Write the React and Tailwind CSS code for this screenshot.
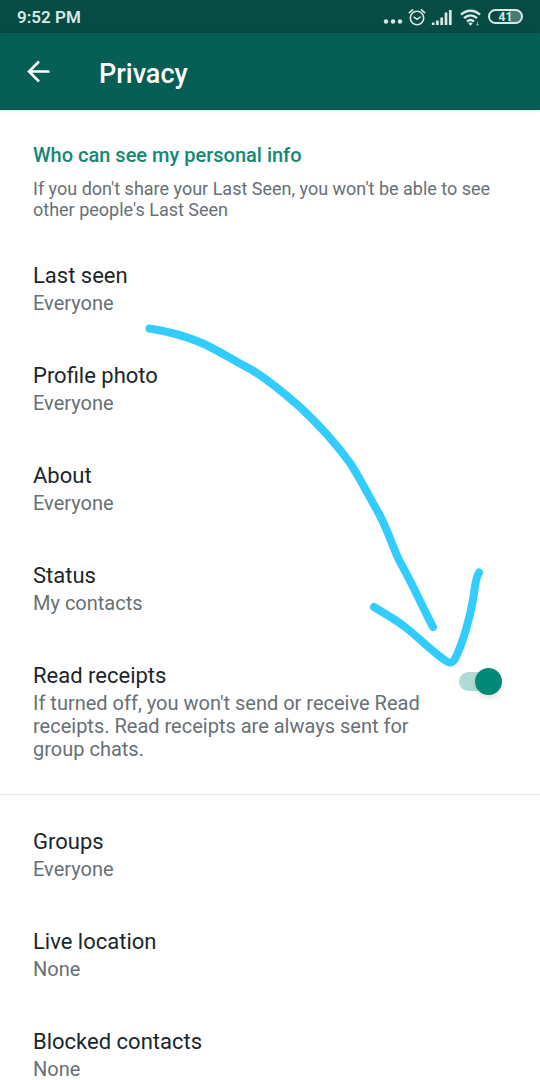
import { useState } from 'react'

const PERSONAL_INFO = [
  { title: 'Last seen', value: 'Everyone' },
  { title: 'Profile photo', value: 'Everyone' },
  { title: 'About', value: 'Everyone' },
  { title: 'Status', value: 'My contacts' }
]

const OTHER_SETTINGS = [
  { title: 'Groups', value: 'Everyone' },
  { title: 'Live location', value: 'None' },
  { title: 'Blocked contacts', value: 'None' }
]

/**
 * WhatsApp privacy settings screen
 */
export default function App() {
  return (
    <div className="relative min-h-screen bg-white font-[Roboto,'Noto_Sans',sans-serif] text-[#1b262c]">
      <StatusBar />
      <AppBar />

      <main>
        <section className="pt-[33px] pb-[9px]">
          <h2 className="px-[33px] text-[20px] leading-6 font-medium text-[#148872]">
            Who can see my personal info
          </h2>
          <p className="mt-[11px] mb-[19px] pl-[33px] pr-8 text-[18px] leading-[21px] text-[#687076]">
            If you don't share your Last Seen, you won't be able to see other people's Last Seen
          </p>

          {PERSONAL_INFO.map((item) => (
            <SettingRow key={item.title} {...item} />
          ))}
          <ReadReceipts />
        </section>

        <section className="border-t border-[#e6e6e6] pt-2.5">
          {OTHER_SETTINGS.map((item) => (
            <SettingRow key={item.title} {...item} />
          ))}
        </section>
      </main>

      <Annotation />
    </div>
  )
}

/**
 * Phone status bar: clock, alarm, signal, wifi, battery
 */
function StatusBar() {
  return (
    <div className="flex h-[33px] items-center justify-between bg-[#064c44] pl-[17px] pr-[17px] text-[#d9e8e5]">
      <span className="text-[17px] leading-5 font-semibold">9:52 PM</span>

      <div className="flex items-center">
        <svg width="20" height="22" viewBox="0 0 20 22" fill="currentColor">
          <circle cx="3" cy="15.500" r="2.200" />
          <circle cx="10" cy="15.500" r="2.200" />
          <circle cx="17" cy="15.500" r="2.200" />
        </svg>

        <svg className="ml-1" width="20" height="22" viewBox="0 0 20 22" fill="none" stroke="currentColor" strokeLinecap="round">
          <circle cx="10" cy="12" r="6.7" strokeWidth="1.6" />
          <path d="M7 11.2l3 2.2 3.2-2.4" strokeWidth="1.5" strokeLinejoin="round" />
          <path d="M2.4 6.6l3.2-2.8M17.6 6.6l-3.2-2.8" strokeWidth="1.7" />
        </svg>

        <svg className="ml-1" width="22" height="22" viewBox="0 0 22 22" fill="none" stroke="currentColor" strokeWidth="2.7">
          <path d="M2.2 19v-2.5M6.4 19v-4.5M10.7 19v-7.5M15 19V6.500M19.3 19V4" />
        </svg>

        <svg className="ml-[7px]" width="22" height="22" viewBox="0 0 22 22" fill="none" stroke="currentColor" strokeWidth="2.4">
          <path d="M1 8.700c5.600-5.300 13.400-5.300 19 0M4 12.200c4-3.700 9-3.700 13 0M7 15.600c2.300-2 4.700-2 7 0" />
          <path d="M8.300 17.300c1.400-1.100 3-1.100 4.400 0l-2.200 2.400z" fill="currentColor" stroke="none" />
          <path d="M17.500 15.500v4M16 18l1.500 1.500 1.500-1.500" strokeWidth="1" opacity="0.5" />
        </svg>

        <div className="ml-1.5 flex h-[15px] w-[35px] items-center justify-center rounded-full border-2 border-current bg-linear-to-r from-transparent from-60% to-[#477c75] to-60% text-[12px] leading-3 font-bold">
          41
        </div>
      </div>
    </div>
  )
}

function AppBar() {
  return (
    <header className="flex h-[77px] items-center bg-[#075e54] pl-[26px] text-white shadow-sm">
      <button type="button" aria-label="Back">
        <svg width="25" height="25" viewBox="0 0 25 25" fill="none" stroke="currentColor" strokeWidth="2.500">
          <path d="M23.500 12.500H3.500M13 2.500l-10 10 10 10" />
        </svg>
      </button>
      <h1 className="mt-1 ml-12 text-[27px] leading-8 font-medium">Privacy</h1>
    </header>
  )
}

/**
 * Tappable row with a title and its current value
 */
function SettingRow({ title, value }) {
  return (
    <button type="button" className="block w-full px-[33px] pt-[23px] pb-6 text-left last:pb-0">
      <span className="block text-[22px] leading-7">{title}</span>
      <span className="mt-0.5 block text-[20px] leading-[23px] text-[#687076]">{value}</span>
    </button>
  )
}

function ReadReceipts() {
  const [enabled, setEnabled] = useState(true)

  return (
    <div className="flex items-start gap-8 pt-[23px] pb-6 pl-[33px] pr-[37px]">
      <label htmlFor="read-receipts" className="flex-1">
        <span className="block text-[22px] leading-7">Read receipts</span>
        <span className="mt-0.5 block text-[20px] leading-[23px] text-[#687076]">
          If turned off, you won't send or receive Read receipts. Read receipts are always sent for group chats.
        </span>
      </label>
      <input
        id="read-receipts"
        type="checkbox"
        role="switch"
        checked={enabled}
        onChange={(e) => setEnabled(e.target.checked)}
        className="mt-2.5 mr-1 flex h-[19px] w-10 shrink-0 appearance-none items-center rounded-full bg-gray-300 before:size-[27px] before:shrink-0 before:rounded-full before:bg-white before:shadow-md before:content-[''] checked:bg-[#b0dbd5] checked:before:translate-x-4 checked:before:bg-[#048877]"
      />
    </div>
  )
}

/**
 * Hand-drawn arrow pointing at the read receipts switch
 */
function Annotation() {
  return (
    <svg
      className="pointer-events-none absolute top-[310px] left-[140px]"
      width="360"
      height="370"
      viewBox="140 310 360 370"
      fill="none"
      stroke="#33ccff"
      strokeWidth="8"
      strokeLinecap="round"
      strokeLinejoin="round"
    >
      <path d="M149.500 328.500C166 331 188 337 203 343.500C217 350 235 361 252 370C273 383 287 396 300 407C316 422 335 442 350 463C358 475 369 496 378 512C388 530 393 548 400 562C411 581 422 606 433 627" />
      <path d="M374 607C387 615 395 619 405 627C418 637 433 652 446 661Q451 665 455 659C463 643 470 617 473 600C475 588 475 579 479 572.500" />
    </svg>
  )
}
